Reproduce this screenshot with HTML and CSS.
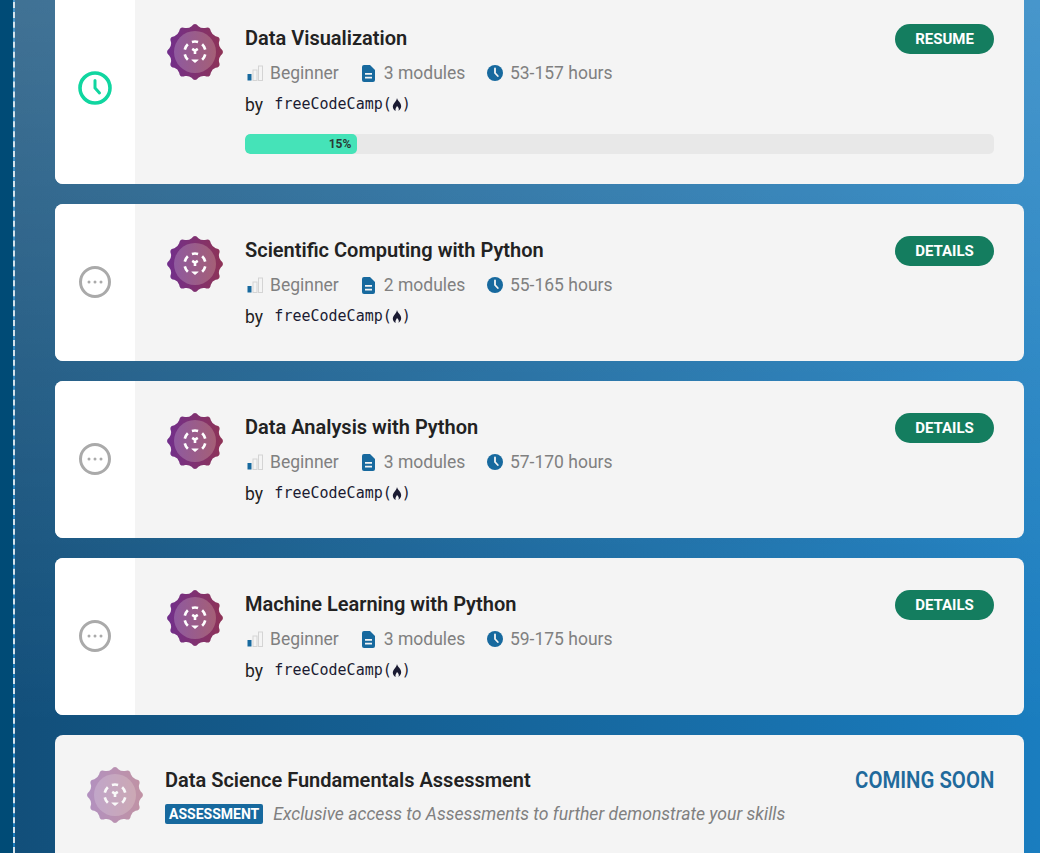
FILE: index.html
```html
<!DOCTYPE html>
<html lang="en">
<head>
    <meta charset="UTF-8">
    <title>Data Science Fundamentals</title>
    <link rel="stylesheet" href="styles.css">
</head>
<body>
    <svg class="icon-defs" width="0" height="0">
        <defs>
            <linearGradient id="badgeOuter" x1="0" y1="0" x2="1" y2="0">
                <stop offset="0" stop-color="#712f8c"/>
                <stop offset="1" stop-color="#8e3356"/>
            </linearGradient>
            <linearGradient id="badgeInner" x1="0" y1="0" x2="1" y2="0">
                <stop offset="0" stop-color="#8f5a9f"/>
                <stop offset="1" stop-color="#a55f76"/>
            </linearGradient>
            <symbol id="badge" viewBox="0 0 56 56">
                <path fill="url(#badgeOuter)" d="M24.61 2.22Q28 -2.2 31.39 2.22Q34.26 4.62 37.95 3.98Q43.1 1.85 43.83 7.37Q45.11 10.89 48.63 12.17Q54.15 12.9 52.02 18.05Q51.38 21.74 53.78 24.61Q58.2 28 53.78 31.39Q51.38 34.26 52.02 37.95Q54.15 43.1 48.63 43.83Q45.11 45.11 43.83 48.63Q43.1 54.15 37.95 52.02Q34.26 51.38 31.39 53.78Q28 58.2 24.61 53.78Q21.74 51.38 18.05 52.02Q12.9 54.15 12.17 48.63Q10.89 45.11 7.37 43.83Q1.85 43.1 3.98 37.95Q4.62 34.26 2.22 31.39Q-2.2 28 2.22 24.61Q4.62 21.74 3.98 18.05Q1.85 12.9 7.37 12.17Q10.89 10.89 12.17 7.37Q12.9 1.85 18.05 3.98Q21.74 4.62 24.61 2.22Z"/>
                <circle cx="28" cy="28" r="21" fill="url(#badgeInner)"/>
                <g fill="none" stroke="#fff" stroke-width="2.6">
                    <path d="M24.93 17.96A10.500 10.500 0 0 1 31.07 17.96"/>
                    <path d="M35.16 20.32A10.500 10.500 0 0 1 38.23 25.64"/>
                    <path d="M38.23 30.36A10.500 10.500 0 0 1 35.16 35.68"/>
                    <path d="M20.84 35.68A10.500 10.500 0 0 1 17.77 30.36"/>
                    <path d="M17.77 25.64A10.500 10.500 0 0 1 20.84 20.32"/>
                    <path d="M25.2 24.800L28 26.600L30.800 24.800M28 26.600V30"/>
                </g>
                <path fill="#fff" d="M24.500 35.500H31.500V36L28 39L24.500 36Z"/>
            </symbol>
            <symbol id="bars" viewBox="0 0 16 16">
                <rect x="0.5" y="9" width="4" height="6.5" fill="#17699e"/>
                <rect x="6" y="5" width="4" height="10.5" fill="none" stroke="#d4d4d4"/>
                <rect x="11.5" y="1" width="4" height="14.5" fill="none" stroke="#d4d4d4"/>
            </symbol>
            <symbol id="doc" viewBox="0 0 13 17">
                <path fill="#17699e" d="M2 0H8L13 5V15a2 2 0 0 1-2 2H2a2 2 0 0 1-2-2V2a2 2 0 0 1 2-2Z"/>
                <path fill="#f4f4f4" d="M3 8H10V9.800H3ZM3 11.800H10V13.600H3Z"/>
            </symbol>
            <symbol id="clock" viewBox="0 0 16 16">
                <circle cx="8" cy="8" r="8" fill="#17699e"/>
                <path fill="none" stroke="#f4f4f4" stroke-width="1.800" stroke-linecap="round" d="M8 3.500V8L10.800 11"/>
            </symbol>
            <symbol id="flame" viewBox="1 0 10 14">
                <path fill="#1b1b32" d="M6 0C6.500 3 10.500 5 10.500 9C10.500 11.500 9 13 7.500 14C8.500 12 8 10 6 8.500C5.500 10 3.800 11 4.500 14C2.800 13 1.500 11.500 1.500 9.500C1.500 6 5.500 4 6 0Z"/>
            </symbol>
        </defs>
    </svg>

    <div class="page">
        <div class="rail"></div>
        <main class="course-list">

            <section class="card">
                <div class="status">
                    <svg class="status-icon" viewBox="0 0 34 34">
                        <circle cx="17" cy="17" r="15" fill="none" stroke="#10d6a0" stroke-width="3.600"/>
                        <path d="M17 9.500V17L21.500 22" fill="none" stroke="#10d6a0" stroke-width="3" stroke-linecap="round"/>
                    </svg>
                </div>
                <div class="card-body">
                    <svg class="badge"><use href="#badge"/></svg>
                    <div class="info">
                        <div class="title-row">
                            <h2>Data Visualization</h2>
                            <a class="btn">RESUME</a>
                        </div>
                        <div class="meta">
                            <span><svg class="i-bars"><use href="#bars"/></svg>Beginner</span>
                            <span><svg class="i-doc"><use href="#doc"/></svg>3 modules</span>
                            <span><svg class="i-clock"><use href="#clock"/></svg>53-157 hours</span>
                        </div>
                        <div class="by">by <span class="fcc">freeCodeCamp(<svg class="flame"><use href="#flame"/></svg>)</span></div>
                        <div class="progress">
                            <div class="progress-fill" style="width: 15%">15%</div>
                        </div>
                    </div>
                </div>
            </section>

            <section class="card">
                <div class="status">
                    <svg class="status-icon pending" viewBox="0 0 34 34">
                        <circle cx="17" cy="17" r="14.500" fill="none" stroke="#aaa" stroke-width="3"/>
                        <circle cx="11" cy="17" r="1.500" fill="#aaa"/>
                        <circle cx="17" cy="17" r="1.500" fill="#aaa"/>
                        <circle cx="23" cy="17" r="1.500" fill="#aaa"/>
                    </svg>
                </div>
                <div class="card-body">
                    <svg class="badge"><use href="#badge"/></svg>
                    <div class="info">
                        <div class="title-row">
                            <h2>Scientific Computing with Python</h2>
                            <a class="btn">DETAILS</a>
                        </div>
                        <div class="meta">
                            <span><svg class="i-bars"><use href="#bars"/></svg>Beginner</span>
                            <span><svg class="i-doc"><use href="#doc"/></svg>2 modules</span>
                            <span><svg class="i-clock"><use href="#clock"/></svg>55-165 hours</span>
                        </div>
                        <div class="by">by <span class="fcc">freeCodeCamp(<svg class="flame"><use href="#flame"/></svg>)</span></div>
                    </div>
                </div>
            </section>

            <section class="card">
                <div class="status">
                    <svg class="status-icon pending" viewBox="0 0 34 34">
                        <circle cx="17" cy="17" r="14.500" fill="none" stroke="#aaa" stroke-width="3"/>
                        <circle cx="11" cy="17" r="1.500" fill="#aaa"/>
                        <circle cx="17" cy="17" r="1.500" fill="#aaa"/>
                        <circle cx="23" cy="17" r="1.500" fill="#aaa"/>
                    </svg>
                </div>
                <div class="card-body">
                    <svg class="badge"><use href="#badge"/></svg>
                    <div class="info">
                        <div class="title-row">
                            <h2>Data Analysis with Python</h2>
                            <a class="btn">DETAILS</a>
                        </div>
                        <div class="meta">
                            <span><svg class="i-bars"><use href="#bars"/></svg>Beginner</span>
                            <span><svg class="i-doc"><use href="#doc"/></svg>3 modules</span>
                            <span><svg class="i-clock"><use href="#clock"/></svg>57-170 hours</span>
                        </div>
                        <div class="by">by <span class="fcc">freeCodeCamp(<svg class="flame"><use href="#flame"/></svg>)</span></div>
                    </div>
                </div>
            </section>

            <section class="card">
                <div class="status">
                    <svg class="status-icon pending" viewBox="0 0 34 34">
                        <circle cx="17" cy="17" r="14.500" fill="none" stroke="#aaa" stroke-width="3"/>
                        <circle cx="11" cy="17" r="1.500" fill="#aaa"/>
                        <circle cx="17" cy="17" r="1.500" fill="#aaa"/>
                        <circle cx="23" cy="17" r="1.500" fill="#aaa"/>
                    </svg>
                </div>
                <div class="card-body">
                    <svg class="badge"><use href="#badge"/></svg>
                    <div class="info">
                        <div class="title-row">
                            <h2>Machine Learning with Python</h2>
                            <a class="btn">DETAILS</a>
                        </div>
                        <div class="meta">
                            <span><svg class="i-bars"><use href="#bars"/></svg>Beginner</span>
                            <span><svg class="i-doc"><use href="#doc"/></svg>3 modules</span>
                            <span><svg class="i-clock"><use href="#clock"/></svg>59-175 hours</span>
                        </div>
                        <div class="by">by <span class="fcc">freeCodeCamp(<svg class="flame"><use href="#flame"/></svg>)</span></div>
                    </div>
                </div>
            </section>

            <section class="card assessment">
                <svg class="badge"><use href="#badge"/></svg>
                <div class="info">
                    <div class="title-row">
                        <h2>Data Science Fundamentals Assessment</h2>
                        <span class="soon">COMING SOON</span>
                    </div>
                    <div class="tag-row">
                        <span class="tag">ASSESSMENT</span>
                        <em>Exclusive access to Assessments to further demonstrate your skills</em>
                    </div>
                </div>
            </section>

        </main>
    </div>
</body>
</html>
```
FILE: styles.css
```css
html, body {
    margin: 0;
    height: 853px;
    overflow: hidden;
}

body {
    font-family: Roboto, "Liberation Sans", sans-serif;
    color: #222;
}

.icon-defs {
    position: absolute;
}

.page {
    display: flex;
    height: 853px;
    overflow: hidden;
}

.rail {
    width: 13px;
    flex-shrink: 0;
    background-color: #004b76;
}

.course-list {
    flex: 1;
    display: flex;
    flex-direction: column;
    gap: 20px;
    margin-top: -8px;
    padding: 0 16px 0 40px;
    border-left: 2px dashed #d5e3ec;
    background-image: linear-gradient(to bottom, rgba(255, 255, 255, 0.2), rgba(255, 255, 255, 0) 85%),
                      linear-gradient(to right, #124f7a, #1a7dbf);
}

.card {
    display: flex;
    flex-shrink: 0;
    background-color: #f4f4f4;
    border-radius: 8px;
    overflow: hidden;
}

.status {
    width: 80px;
    flex-shrink: 0;
    display: flex;
    align-items: center;
    justify-content: center;
    background-color: #fff;
}

.status-icon {
    width: 34px;
    height: 34px;
}

.status-icon.pending {
    margin-bottom: 2px;
}

.card-body {
    flex: 1;
    display: flex;
    gap: 22px;
    padding: 32px 30px 30px 32px;
}

.badge {
    width: 56px;
    height: 56px;
    flex-shrink: 0;
}

.info {
    flex: 1;
}

.title-row {
    display: flex;
    justify-content: space-between;
    align-items: flex-start;
}

h2 {
    margin: 0;
    font-size: 20px;
    font-weight: 600;
    line-height: 28px;
    color: #222;
}

.btn {
    width: 99px;
    height: 30px;
    border-radius: 15px;
    background-color: #147d5f;
    color: #fff;
    font-size: 15px;
    font-weight: 700;
    line-height: 30px;
    text-align: center;
}

.meta {
    display: flex;
    gap: 22px;
    margin-top: 7px;
    font-size: 17.5px;
    line-height: 24px;
    color: #808080;
}

.meta span {
    display: flex;
    align-items: center;
}

.i-bars {
    width: 16px;
    height: 16px;
    margin: 0 7px 0 2px;
}

.i-doc {
    width: 13px;
    height: 17px;
    margin: 0 9px 0 1px;
}

.i-clock {
    width: 16px;
    height: 16px;
    margin-right: 6.5px;
}

.by {
    height: 28px;
    margin-top: 6px;
    font-size: 17.5px;
    line-height: 28px;
    color: #222;
}

.fcc {
    position: relative;
    top: -2px;
    margin-left: 7px;
    font-family: "DejaVu Sans Mono", monospace;
    font-size: 15px;
    color: #1b1b32;
}

.flame {
    width: 10px;
    height: 13px;
    vertical-align: -2px;
}

.progress {
    height: 20px;
    margin-top: 15px;
    border-radius: 5px;
    background-color: #e8e8e8;
    overflow: hidden;
}

.progress-fill {
    height: 20px;
    box-sizing: border-box;
    padding-right: 6px;
    border-radius: 5px;
    background-color: #45e3b8;
    color: #2a3a36;
    font-size: 12px;
    font-weight: 700;
    line-height: 21px;
    text-align: right;
}

.assessment {
    gap: 22px;
    padding: 32px 30px 32px 32px;
    height: 150px;
    box-sizing: border-box;
}

.assessment .badge {
    opacity: 0.5;
}

.assessment .info {
    margin-top: -1px;
}

.soon {
    color: #1f6a9c;
    font-size: 23px;
    font-weight: 600;
    line-height: 30px;
    transform: scaleX(0.885);
    transform-origin: right center;
}

.tag-row {
    display: flex;
    align-items: center;
    gap: 10px;
    margin-top: 8px;
}

.tag {
    padding: 0 4px;
    border-radius: 2px;
    background-color: #17699e;
    color: #fff;
    font-size: 14px;
    font-weight: 700;
    line-height: 20px;
}

.tag-row em {
    font-size: 17.6px;
    color: #808080;
}
```
